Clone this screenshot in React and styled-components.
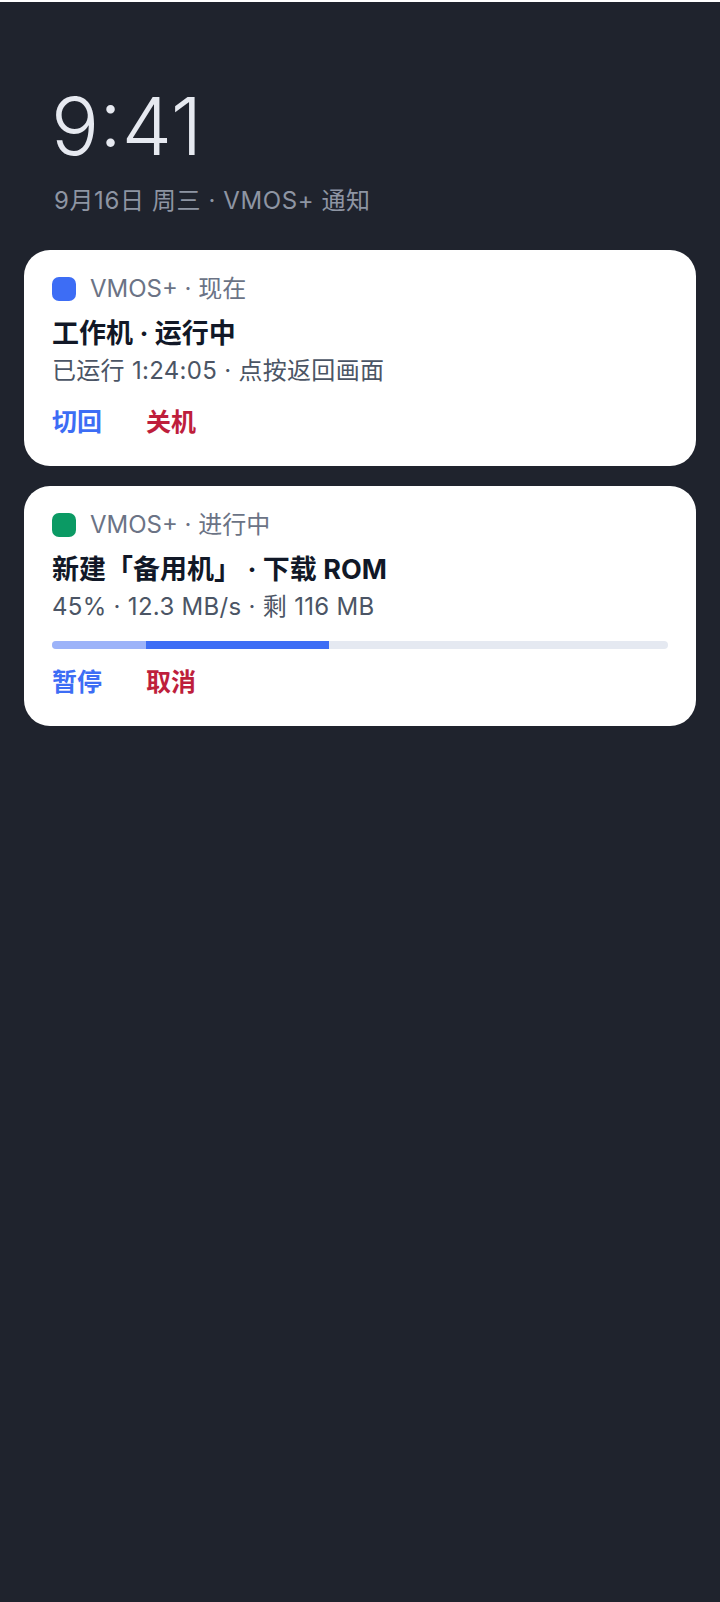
import React from 'react';
import styled, {createGlobalStyle} from 'styled-components';

const GlobalStyle = createGlobalStyle`
    html, body {
        margin: 0;
        padding: 0;
        background-color: #ffffff;
    }
    body {
        padding-top: 2px;
        font-family: Inter, "Noto Sans CJK SC", sans-serif;
        -webkit-font-smoothing: antialiased;
    }
`;

const Screen = styled.div`
    background-color: #1f232d;
    min-height: 1600px;
    padding: 84px 24px 0;
    box-sizing: border-box;
`;

const Header = styled.div`
    padding-left: 30px;
    display: flex;
    flex-direction: column;
`;

const Clock = styled.div`
    font-size: 80px;
    line-height: 80px;
    font-weight: 300;
    color: #e6e9f0;
    margin-left: -3px;
`;

const DateLine = styled.div`
    margin-top: 19px;
    font-size: 24px;
    line-height: 32px;
    letter-spacing: 0.6px;
    color: #8e95a3;
`;

const List = styled.div`
    margin-top: 33px;
    display: flex;
    flex-direction: column;
    gap: 20px;
`;

const Card = styled.div`
    background-color: #ffffff;
    border-radius: 26px;
    padding: 22px 28px 28px;
    display: flex;
    flex-direction: column;
`;

const AppRow = styled.div`
    display: flex;
    align-items: center;
    gap: 14px;
    height: 34px;
`;

const AppIcon = styled.span`
    width: 24px;
    height: 24px;
    border-radius: 7px;
    background-color: ${({color}) => color};
    flex-shrink: 0;
`;

const AppName = styled.span`
    font-size: 24px;
    line-height: 34px;
    color: #6b7385;
`;

const Title = styled.div`
    margin-top: 11px;
    font-size: 27px;
    line-height: 34px;
    font-weight: 700;
    color: #111827;
`;

const Sub = styled.div`
    margin-top: 4px;
    font-size: 24px;
    line-height: 32px;
    letter-spacing: 0.3px;
    color: #4b5565;
`;

const Track = styled.div`
    margin-top: 18px;
    height: 8px;
    border-radius: 4px;
    background-color: #e5e9f1;
    overflow: hidden;
    display: flex;
`;

const Segment = styled.div`
    height: 100%;
    background-color: ${({light}) => light ? '#9cb3f9' : '#3d6df5'};
`;

const Actions = styled.div`
    margin-top: ${({afterBar}) => afterBar ? '17px' : '19px'};
    display: flex;
    gap: 44px;
`;

const Action = styled.button`
    border: none;
    background: none;
    padding: 0;
    font-family: inherit;
    font-size: 25px;
    line-height: 32px;
    font-weight: 700;
    color: ${({danger}) => danger ? '#be1e3c' : '#3d6df5'};
    cursor: pointer;
`;

const notifications = [
    {
        id: 'running',
        icon: '#3d6df5',
        meta: 'VMOS+ · 现在',
        title: '工作机 · 运行中',
        sub: '已运行 1:24:05 · 点按返回画面',
        primary: '切回',
        danger: '关机',
    },
    {
        id: 'download',
        icon: '#0b9a64',
        meta: 'VMOS+ · 进行中',
        title: '新建「备用机」 · 下载 ROM',
        sub: '45% · 12.3 MB/s · 剩 116 MB',
        progress: {buffered: 15.3, done: 45},
        primary: '暂停',
        danger: '取消',
    },
];

const Notification = ({n}) => (
    <Card>
        <AppRow>
            <AppIcon color={n.icon}/>
            <AppName>{n.meta}</AppName>
        </AppRow>
        <Title>{n.title}</Title>
        <Sub>{n.sub}</Sub>
        {n.progress && <Track>
            <Segment light style={{width: n.progress.buffered + '%'}}/>
            <Segment style={{width: (n.progress.done - n.progress.buffered) + '%'}}/>
        </Track>}
        <Actions afterBar={!!n.progress}>
            <Action>{n.primary}</Action>
            <Action danger>{n.danger}</Action>
        </Actions>
    </Card>
);

export default function App() {
    return (
        <>
            <GlobalStyle/>
            <Screen>
                <Header>
                    <Clock>9:41</Clock>
                    <DateLine>9月16日 周三 · VMOS+ 通知</DateLine>
                </Header>
                <List>
                    {notifications.map(n => <Notification key={n.id} n={n}/>)}
                </List>
            </Screen>
        </>
    );
}
